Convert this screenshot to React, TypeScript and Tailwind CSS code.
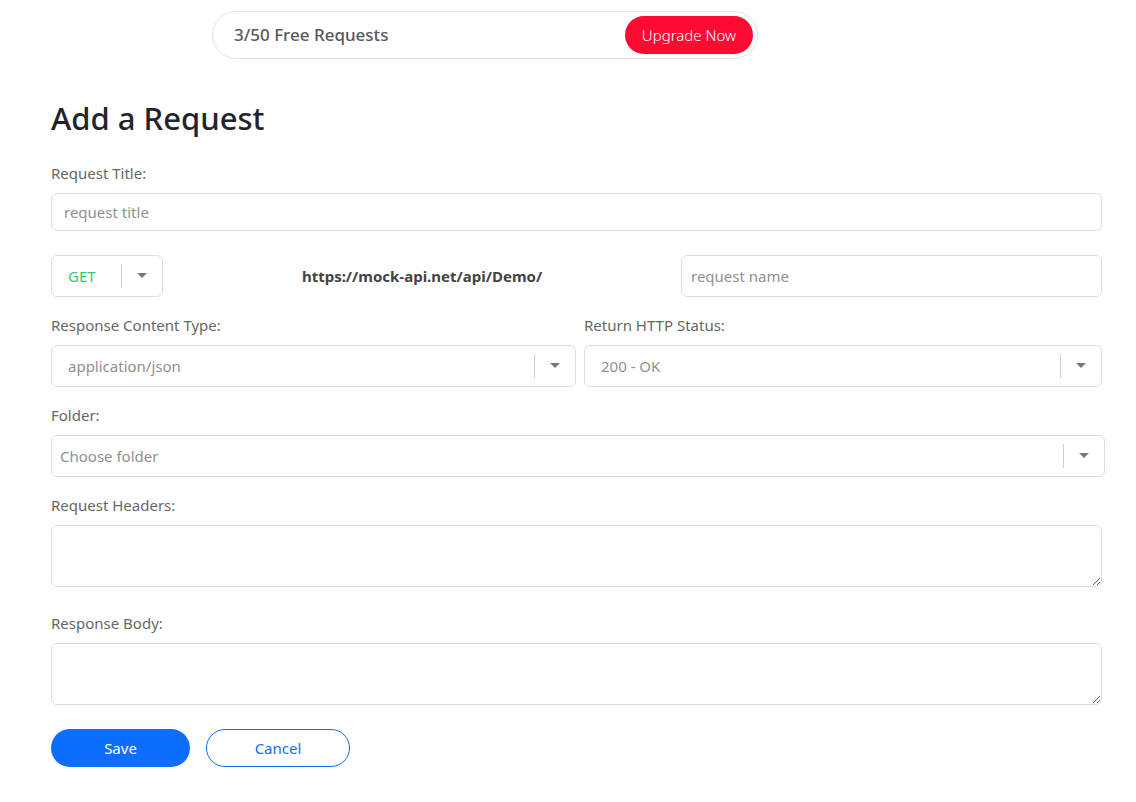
import { ChangeEvent, useState } from 'react'

const FONT = "font-['Noto_Sans',sans-serif]"

function Caret() {
  return (
    <svg width="10" height="6" viewBox="0 0 10 6" className="fill-[#777]">
      <path d="M0 0h10L5 5z" />
    </svg>
  )
}

function SelectBox({ value, placeholder, className, valueClass }: { value?: string; placeholder?: string; className?: string; valueClass?: string }) {
  return (
    <div className={`flex h-[42px] items-center rounded-[6px] border border-[#dedede] bg-white ${className ?? ''}`}>
      <span className={`flex-1 truncate text-[15px] ${valueClass ?? 'pl-4 text-[#8f8f8f]'}`}>{value ?? placeholder}</span>
      <span className="h-[24px] w-px bg-[#cfcfcf]" />
      <span className="flex w-[40px] items-center justify-center"><Caret /></span>
    </div>
  )
}

function Label({ children, className }: { children: React.ReactNode; className?: string }) {
  return <label className={`block text-[15px] leading-[22px] text-[#676767] ${className ?? ''}`}>{children}</label>
}

export default function App() {
  const [title, setTitle] = useState('')
  const [name, setName] = useState('')

  return (
    <div className={`${FONT} min-h-[802px] bg-white px-[51px] pb-10`}>
      <div className="ml-[161px] mt-[11px] flex h-[48px] w-[546px] items-center justify-between rounded-full border border-[#e0e3e6] pl-[21px] pr-[4px]">
        <span className="text-[17px] font-medium text-[#555a60]">3/50 Free Requests</span>
        <button className="h-[38px] rounded-full bg-[#ff0a33] px-[17px] text-[15px] font-light text-white">Upgrade Now</button>
      </div>

      <h1 className="mt-[40px] text-[31px] font-medium leading-[38px] text-[#212529]">Add a Request</h1>

      <Label className="mt-[25px]">Request Title:</Label>
      <input
        value={title}
        onChange={(e: ChangeEvent<HTMLInputElement>) => setTitle(e.target.value)}
        placeholder="request title"
        className="mt-[9px] block h-[38px] w-[1051px] rounded-[6px] border border-[#dedede] px-3 text-[15px] text-[#333] outline-none placeholder:text-[#8f8f8f]"
      />

      <div className="mt-[24px] flex w-[1051px] items-center">
        <SelectBox value="GET" className="w-[112px]" valueClass="pl-4 text-[#2ecc71]" />
        <div className="flex-1 text-center text-[15px] font-bold text-[#444]">https://mock-api.net/api/Demo/</div>
        <input
          value={name}
          onChange={(e: ChangeEvent<HTMLInputElement>) => setName(e.target.value)}
          placeholder="request name"
          className="block h-[42px] w-[421px] rounded-[6px] border border-[#dedede] px-[9px] text-[15px] text-[#333] outline-none placeholder:text-[#8f8f8f]"
        />
      </div>

      <div className="mt-[17px] flex w-[1051px] gap-[8px]">
        <div className="w-[525px]">
          <Label>Response Content Type:</Label>
          <SelectBox value="application/json" className="mt-[9px]" />
        </div>
        <div className="flex-1">
          <Label>Return HTTP Status:</Label>
          <SelectBox value="200 - OK" className="mt-[9px]" />
        </div>
      </div>

      <Label className="mt-[17px]">Folder:</Label>
      <SelectBox placeholder="Choose folder" className="mt-[9px] w-[1054px]" valueClass="pl-[8px] text-[#8f8f8f]" />

      <Label className="mt-[17px]">Request Headers:</Label>
      <textarea className="mt-[9px] block h-[62px] w-[1051px] rounded-[6px] border border-[#dedede] px-3 py-2 text-[15px] outline-none" />

      <Label className="mt-[25px]">Response Body:</Label>
      <textarea className="mt-[9px] block h-[62px] w-[1051px] rounded-[6px] border border-[#dedede] px-3 py-2 text-[15px] outline-none" />

      <div className="mt-[24px] flex gap-[16px]">
        <button className="h-[38px] w-[139px] rounded-full bg-[#0d6efd] text-[15px] text-white">Save</button>
        <button className="h-[38px] w-[144px] rounded-full border border-[#0d6efd] text-[15px] text-[#0d6efd]">Cancel</button>
      </div>
    </div>
  )
}
